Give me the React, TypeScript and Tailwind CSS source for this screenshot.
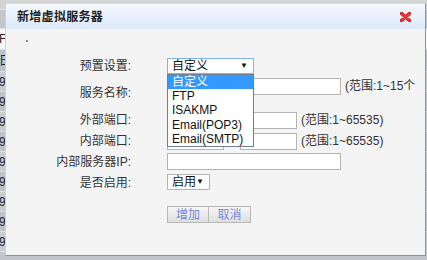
import React from 'react';

const FONT = '"Liberation Sans", "Noto Sans CJK SC", sans-serif';

// background table rows peeking out on the left side
const bgRows = [
  { h: 'h-[10px]', bg: 'bg-[#d3d3d3]', t: '' },
  { h: 'h-[19px]', bg: 'bg-[#c4c6c9]', t: '' },
  { h: 'h-[21px]', bg: 'bg-[#f7f7f7]', t: 'F' },
  { h: 'h-[22px]', bg: 'bg-[#b9c1cc]', t: '日' },
  ...Array.from({ length: 9 }).map((_, i) => ({
    h: 'h-[20px]',
    bg: i % 2 === 0 ? 'bg-[#c9ccd1]' : 'bg-[#bec3ca]',
    t: '9',
  })),
];

const options = ['自定义', 'FTP', 'ISAKMP', 'Email(POP3)', 'Email(SMTP)'];

const CloseIcon = () => (
  <svg width="11" height="10" viewBox="0 0 11 10">
    <path d="M1.5 1.5 L9.5 8.5 M9.5 1.5 L1.5 8.5" stroke="#b51010" strokeWidth="3.4" strokeLinecap="round" />
    <path d="M1.5 1.5 L9.5 8.5 M9.5 1.5 L1.5 8.5" stroke="#f03a3a" strokeWidth="2" strokeLinecap="round" />
  </svg>
);

const Label = ({ text, pt }: { text: string; pt: string }) => (
  <div className={`w-[125px] shrink-0 text-right leading-[17px] text-[12px] text-[#333] ${pt}`}>{text}</div>
);

const Input = ({ w }: { w: string }) => (
  <div className={`${w} h-[17px] shrink-0 border border-[#b4b4b4] bg-white`} />
);

export default function App() {
  return (
    <div className="relative w-[427px] h-[260px] overflow-hidden bg-[#c2c5c9]" style={{ fontFamily: FONT }}>
      {/* page behind the dialog */}
      <div className="flex flex-col">
        {bgRows.map((r, i) => (
          <div key={i} className={`${r.h} ${r.bg} border-b border-[#dfe1e4] flex items-center text-[12px] text-[#222] leading-none`}>
            <span className="ml-[-1px]">{r.t}</span>
          </div>
        ))}
      </div>

      {/* dialog */}
      <div className="absolute left-[5px] top-[3px] w-[421px] h-[253px] border border-[#5a9ee8] border-t-[#c9dff6] border-l-[#b9d6f4] bg-[#f4f4f4] flex flex-col">
        <div className="h-[25px] flex items-center justify-between pl-[11px] pr-[14px] bg-gradient-to-b from-[#f6f9fe] to-[#dde9f8]">
          <span className="text-[12px] font-bold text-[#222] tracking-[0.3px]">新增虚拟服务器</span>
          <CloseIcon />
        </div>

        <div className="relative flex-1 pt-[11px]">
          <div className="ml-[20px] w-[2px] h-[2px] bg-[#8a8a8a]" />

          <div className="mt-[16px] flex flex-col text-[12px] text-[#333]">
            {/* 预置设置 */}
            <div className="flex items-start h-[19px]">
              <Label text="预置设置:" pt="pt-0" />
              <div className="relative ml-[36px] z-10">
                <div className="w-[87px] h-[16px] border border-[#7eb4ea] bg-white flex items-center justify-between pl-[4px] pr-[5px] leading-none text-[12px] text-[#111]">
                  <span>自定义</span>
                  <span className="text-[8px]">▼</span>
                </div>
                <div className="absolute left-0 top-full w-[87px] border border-[#6f7f92] bg-white flex flex-col py-0">
                  {options.map((o, i) => (
                    <div
                      key={o}
                      className={`h-[14.2px] leading-[14px] pl-[4px] text-[12px] ${i === 0 ? 'bg-[#3399ff] text-white' : 'text-[#111]'}`}
                    >
                      {o}
                    </div>
                  ))}
                </div>
              </div>
            </div>

            {/* 服务名称 */}
            <div className="flex items-start h-[34px]">
              <Label text="服务名称:" pt="pt-[8px]" />
              <div className="ml-[36px] flex items-center">
                <Input w="w-[174px]" />
                <span className="ml-[4px] whitespace-nowrap">(范围:1~15个</span>
              </div>
            </div>

            {/* 外部端口 */}
            <div className="flex items-start h-[21px]">
              <Label text="外部端口:" pt="pt-[1px]" />
              <div className="ml-[36px] flex items-center gap-[16px]">
                <Input w="w-[57px]" />
                <div className="flex items-center">
                  <Input w="w-[57px]" />
                  <span className="ml-[4px] whitespace-nowrap">(范围:1~65535)</span>
                </div>
              </div>
            </div>

            {/* 内部端口 */}
            <div className="flex items-start h-[21px]">
              <Label text="内部端口:" pt="pt-[1px]" />
              <div className="ml-[36px] flex items-center gap-[16px]">
                <Input w="w-[57px]" />
                <div className="flex items-center">
                  <Input w="w-[57px]" />
                  <span className="ml-[4px] whitespace-nowrap">(范围:1~65535)</span>
                </div>
              </div>
            </div>

            {/* 内部服务器IP */}
            <div className="flex items-start h-[21px]">
              <Label text="内部服务器IP:" pt="pt-[1px]" />
              <div className="ml-[36px]">
                <Input w="w-[174px]" />
              </div>
            </div>

            {/* 是否启用 */}
            <div className="flex items-start h-[21px]">
              <Label text="是否启用:" pt="pt-[1px]" />
              <div className="ml-[36px] w-[43px] h-[16px] border border-[#b4b4b4] bg-white flex items-center justify-between pl-[4px] pr-[5px] leading-none text-[#111]">
                <span>启用</span>
                <span className="text-[8px]">▼</span>
              </div>
            </div>

            {/* buttons */}
            <div className="flex mt-[11px] ml-[161px]">
              <button className="w-[42px] h-[17px] border border-[#b8b8b8] bg-gradient-to-b from-[#f7f7f7] to-[#dedede] text-[12px] leading-none text-[#7388dd]">
                增加
              </button>
              <button className="w-[42px] h-[17px] border border-l-0 border-[#b8b8b8] bg-gradient-to-b from-[#f7f7f7] to-[#dedede] text-[12px] leading-none text-[#7388dd]">
                取消
              </button>
            </div>
          </div>
        </div>
      </div>
    </div>
  );
}
